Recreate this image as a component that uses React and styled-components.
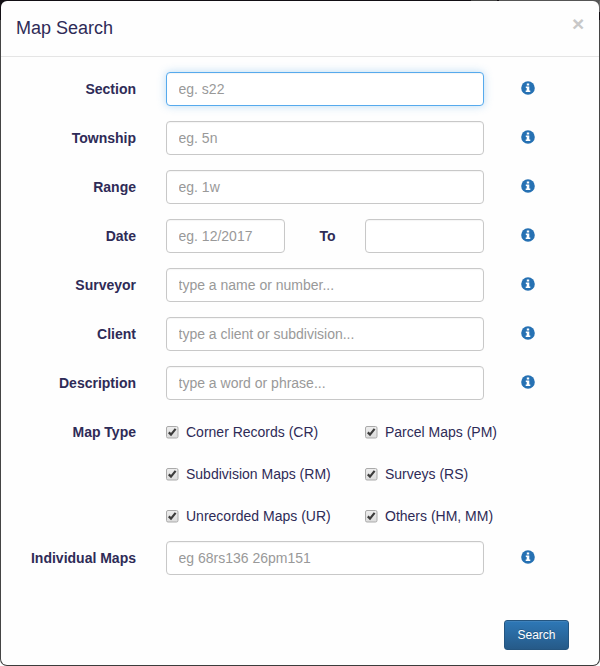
import React from "react";
import styled, { createGlobalStyle, css } from "styled-components";

const GlobalStyle = createGlobalStyle`
  * { box-sizing: border-box; }
  body {
    margin: 0;
    background: #fefefe;
    color: #2e2b57;
    font: 14px/20px "Liberation Sans", Arial, sans-serif;
  }
`;

const Backdrop = styled.div`
  height: 666px;
  padding: 1px;
  border-radius: 0 0 7px 7px;
  background:
    linear-gradient(90deg, #120f14 0 471px, #444 471px 497px, #120f14 497px 499px, #555 499px) top / 100% 1px no-repeat,
    linear-gradient(#120f14 0 20px, #444 20px) left / 1px 100% no-repeat,
    linear-gradient(#666 0 12px, #120f14 12px 20px, #444 20px) right / 1px 100% no-repeat,
    linear-gradient(90deg, #120f14 50%, #555 50%) top / 100% 8px no-repeat,
    #3c3c3c;
`;

const Dialog = styled.section`
  display: flex;
  flex-direction: column;
  height: 664px;
  border-radius: 6px;
  background: #fefefe;
`;

const Header = styled.header`
  display: flex;
  justify-content: space-between;
  height: 56px;
  padding: 15px;
  border-bottom: 1px solid #e5e5e5;
`;

const Title = styled.h4`
  margin: 0;
  font-size: 18px;
  font-weight: 400;
  line-height: 25px;
`;

const CloseButton = styled.button`
  display: flex;
  width: 12px;
  height: 18px;
  margin-top: -1px;
  padding: 0;
  border: 0;
  background: none;
  color: #c8c8c8;
  font: bold 21px/18px "Liberation Sans", Arial, sans-serif;
`;

const Form = styled.form`
  display: flex;
  flex-direction: column;
  gap: 15px;
  padding: 15px 0 0 15px;
`;

const Row = styled.div`
  display: grid;
  grid-template-columns: 120px 318px 14px;
  column-gap: 30px;
  align-items: start;
  height: ${({ $tall }) => ($tall ? "111px" : "34px")};
`;

const labelText = css`
  padding-top: 7px;
  font-weight: 700;
`;

const Label = styled.label`
  ${labelText}
  text-align: right;
  white-space: nowrap;
`;

const ToLabel = styled.span`
  ${labelText}
  padding-left: 5px;
  text-align: center;
  width: 50px;
`;

const Input = styled.input`
  width: ${({ $short }) => ($short ? "119px" : "318px")};
  height: 34px;
  padding: 6px 11.5px;
  border: 1px solid ${({ $active }) => ($active ? "#56aaed" : "#c8c8c8")};
  border-radius: 4px;
  outline: 0;
  background: #fff;
  box-shadow: inset 0 1px 1px rgba(0, 0, 0, 0.04)
    ${({ $active }) => ($active ? ", 0 0 8px rgba(102, 175, 233, 0.45)" : "")};
  color: #555;
  font: 14px/20px "Liberation Sans", Arial, sans-serif;
  &::placeholder { color: #999; opacity: 1; }
`;

const DateRange = styled.div`
  display: flex;
  justify-content: space-between;
  width: 318px;
`;

const InfoSvg = styled.svg`
  display: block;
  width: 14px;
  height: 14px;
  margin: 9px 0 0 7px;
`;

const Options = styled.div`
  display: grid;
  grid-template-columns: 199px 1fr;
  row-gap: 22px;
  padding-top: 7px;
`;

const Option = styled.label`
  display: flex;
  align-items: center;
  gap: 7px;
  height: 20px;
  white-space: nowrap;
`;

const CheckSvg = styled.svg`
  display: block;
  flex: none;
  width: 13px;
  height: 13px;
`;

const Footer = styled.footer`
  display: flex;
  justify-content: flex-end;
  margin-top: 45px;
  padding-right: 30px;
`;

const SearchButton = styled.button`
  width: 65px;
  height: 30px;
  padding: 0;
  border: 1px solid #245580;
  border-radius: 3px;
  background: linear-gradient(#2e78b7, #265a88);
  box-shadow: inset 0 1px 0 rgba(255, 255, 255, 0.08);
  color: #fff;
  font: 12px/18px "Liberation Sans", Arial, sans-serif;
  text-shadow: 0 -1px 0 rgba(0, 0, 0, 0.2);
`;

const InfoIcon = () => (
  <InfoSvg viewBox="0 0 14 14">
    <circle cx="7" cy="7" r="6.8" fill="#2671b3" />
    <path d="M5.8 2.5h2.4v2H5.8zM4.8 5.6h3.5v4h1v1.5H4.7V9.6h1V7h-.9z" fill="#fff" />
  </InfoSvg>
);

const CheckIcon = () => (
  <CheckSvg viewBox="0 0 13 13">
    <defs>
      <linearGradient id="box" x1="0" y1="0" x2="0" y2="1">
        <stop offset="0" stopColor="#eee" />
        <stop offset="1" stopColor="#dcdcdc" />
      </linearGradient>
    </defs>
    <rect x=".5" y=".5" width="11.5" height="11.5" rx="1.5" fill="url(#box)" stroke="#aaa" />
    <path d="M2.8 6.4 5 8.6 9.6 2.9" fill="none" stroke="#3c3c3c" strokeWidth="2.2" />
  </CheckSvg>
);

const Field = ({ label, placeholder, active }) => (
  <Row>
    <Label>{label}</Label>
    <Input placeholder={placeholder} $active={active} />
    <InfoIcon />
  </Row>
);

const mapTypes = [
  "Corner Records (CR)",
  "Parcel Maps (PM)",
  "Subdivision Maps (RM)",
  "Surveys (RS)",
  "Unrecorded Maps (UR)",
  "Others (HM, MM)",
];

export default function App() {
  return (
    <Backdrop>
      <GlobalStyle />
      <Dialog>
        <Header>
          <Title>Map Search</Title>
          <CloseButton type="button">×</CloseButton>
        </Header>
        <Form>
          <Field label="Section" placeholder="eg. s22" active />
          <Field label="Township" placeholder="eg. 5n" />
          <Field label="Range" placeholder="eg. 1w" />
          <Row>
            <Label>Date</Label>
            <DateRange>
              <Input $short placeholder="eg. 12/2017" />
              <ToLabel>To</ToLabel>
              <Input $short />
            </DateRange>
            <InfoIcon />
          </Row>
          <Field label="Surveyor" placeholder="type a name or number..." />
          <Field label="Client" placeholder="type a client or subdivision..." />
          <Field label="Description" placeholder="type a word or phrase..." />
          <Row $tall>
            <Label>Map Type</Label>
            <Options>
              {mapTypes.map((name) => (
                <Option key={name}>
                  <CheckIcon />
                  {name}
                </Option>
              ))}
            </Options>
          </Row>
          <Field label="Individual Maps" placeholder="eg 68rs136 26pm151" />
        </Form>
        <Footer>
          <SearchButton type="button">Search</SearchButton>
        </Footer>
      </Dialog>
    </Backdrop>
  );
}
